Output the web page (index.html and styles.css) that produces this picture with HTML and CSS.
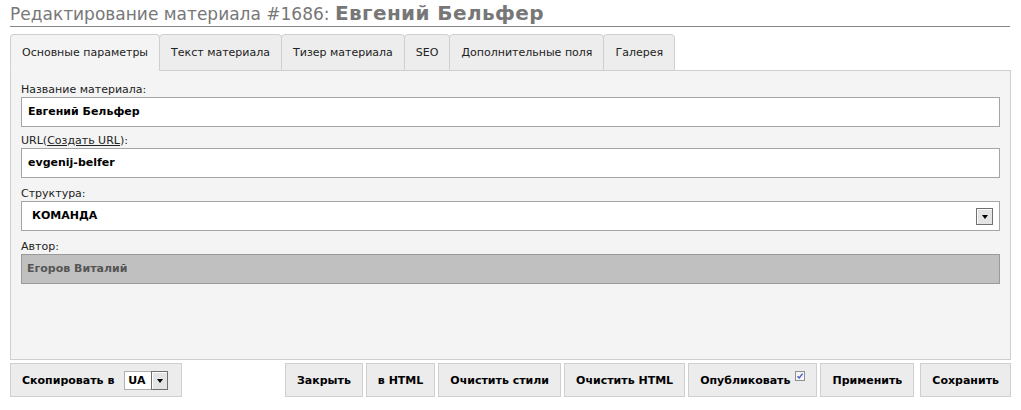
FILE: index.html
```html
<!DOCTYPE html>
<html lang="ru">
<head>
<meta charset="utf-8">
<title>Редактирование материала</title>
<link rel="stylesheet" href="styles.css">
</head>
<body>
<div class="page">
  <h1 class="title">Редактирование материала #1686: <b>Евгений Бельфер</b></h1>
  <div class="tabs">
    <div class="tab active">Основные параметры</div>
    <div class="tab">Текст материала</div>
    <div class="tab">Тизер материала</div>
    <div class="tab">SEO</div>
    <div class="tab">Дополнительные поля</div>
    <div class="tab">Галерея</div>
  </div>
  <div class="panel">
    <div class="field field-first">
      <div class="label">Название материала:</div>
      <div class="input">Евгений Бельфер</div>
    </div>
    <div class="field field-url">
      <div class="label">URL(<a class="link" href="#">Создать URL</a>):</div>
      <div class="input">evgenij-belfer</div>
    </div>
    <div class="field">
      <div class="label">Структура:</div>
      <div class="input select">
        <span class="select-text">КОМАНДА</span>
        <span class="arrow"></span>
      </div>
    </div>
    <div class="field">
      <div class="label">Автор:</div>
      <div class="input disabled">Егоров Виталий</div>
    </div>
  </div>
  <div class="actions">
    <div class="btn btn-copy">Скопировать в
      <span class="mini-select"><span class="mini-text">UA</span><span class="arrow arrow-mini"></span></span>
    </div>
    <div class="btn-group">
      <div class="btn">Закрыть</div>
      <div class="btn">в HTML</div>
      <div class="btn">Очистить стили</div>
      <div class="btn">Очистить HTML</div>
      <div class="btn">Опубликовать <svg class="check" width="10" height="10" viewBox="0 0 10 10"><rect x="0.5" y="0.5" width="9" height="9" fill="#f4f4f4" stroke="#8e8f8f"/><path d="M2.5 5.2 L4.2 7 L7.6 2.6" fill="none" stroke="#4a5fc0" stroke-width="1.4"/></svg></div>
      <div class="btn">Применить</div>
      <div class="btn btn-save">Сохранить</div>
    </div>
  </div>
</div>
</body>
</html>
```
FILE: styles.css
```css
html, body {
  margin: 0;
  padding: 0;
  background: #fff;
}
body {
  font-family: "DejaVu Sans", Tahoma, sans-serif;
  font-size: 11px;
  color: #222;
}
.page {
  padding: 0 10px;
  width: 1001px;
}
.title {
  margin: 0;
  font-size: 17px;
  font-weight: normal;
  line-height: 26px;
  height: 26px;
  color: #777;
  border-bottom: 1px solid #888;
  width: 1000px;
  white-space: nowrap;
}
.title b {
  font-weight: bold;
  font-size: 20px;
  letter-spacing: 0.4px;
  color: #777;
}
.tabs {
  display: flex;
  margin-top: 7px;
  margin-bottom: -1px;
  position: relative;
  z-index: 1;
}
.tab {
  height: 35px;
  line-height: 35px;
  padding: 0 11px;
  background: #ededed;
  border: 1px solid #cfcfcf;
  border-radius: 4px 4px 0 0;
  margin-right: -1px;
  color: #222;
  white-space: nowrap;
}
.tab.active {
  background: #f4f4f4;
  border-bottom-color: #f4f4f4;
}
.panel {
  box-sizing: border-box;
  background: #f4f4f4;
  border: 1px solid #cfcfcf;
  height: 290px;
  padding: 12px 10px 0;
}
.field {
  margin-top: 9px;
}
.field-first {
  margin-top: 0;
}
.field-url {
  margin-top: 7px;
}
.label {
  line-height: 14px;
  height: 14px;
  color: #222;
}
.link {
  color: #222;
  text-decoration: underline;
}
.input {
  box-sizing: border-box;
  height: 30px;
  line-height: 28px;
  border: 1px solid #a5a5a5;
  background: #fff;
  padding: 0 6px;
  font-weight: bold;
  color: #000;
}
.select {
  display: flex;
  align-items: center;
  justify-content: space-between;
  padding: 0 6px 0 10px;
}
.disabled {
  background: #c0c0c0;
  border-color: #9a9a9a;
  color: #555;
  padding-left: 5px;
}
.arrow {
  box-sizing: border-box;
  width: 17px;
  height: 17px;
  border: 1px solid #707070;
  background: #e4e4e4;
  box-shadow: inset 1px 1px 0 #fff;
  display: inline-flex;
  align-items: center;
  justify-content: center;
  padding-top: 2px;
}
.arrow::after {
  content: "";
  width: 0;
  height: 0;
  border-left: 3.5px solid transparent;
  border-right: 3.5px solid transparent;
  border-top: 4px solid #000;
}
.actions {
  display: flex;
  justify-content: space-between;
  margin-top: 3px;
}
.btn-group {
  display: flex;
  gap: 3px;
}
.btn {
  box-sizing: border-box;
  height: 34px;
  display: flex;
  align-items: center;
  padding: 0 11px;
  background: #ececec;
  border: 1px solid #cfcfcf;
  font-weight: bold;
  color: #000;
  white-space: nowrap;
}
.btn-save {
  margin-left: 3px;
}
.btn-copy {
  padding-right: 13px;
}
.mini-select {
  box-sizing: border-box;
  display: inline-flex;
  align-items: center;
  justify-content: space-between;
  margin-left: 10px;
  width: 44px;
  height: 19px;
  border: 1px solid #b0b0b0;
  background: #fff;
  padding-left: 3px;
}
.arrow-mini {
  height: 19px;
  margin-right: -1px;
}
.check {
  margin-left: 5px;
  position: relative;
  top: -4px;
}
```
